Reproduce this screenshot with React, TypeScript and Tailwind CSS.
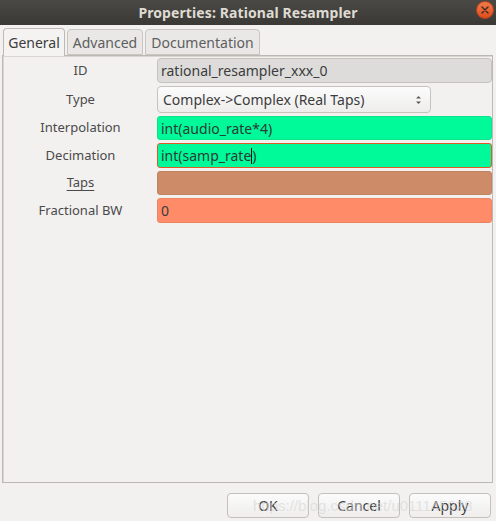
import React from "react";

const font = { fontFamily: '"Noto Sans", "DejaVu Sans", sans-serif' };

function Label({ children, underline }: { children: React.ReactNode; underline?: boolean }) {
  return (
    <div className="w-[153px] shrink-0 flex items-center justify-center text-[13px] text-[#4a4a4a]">
      <span className={underline ? "underline underline-offset-[3px]" : ""}>{children}</span>
    </div>
  );
}

export default function App() {
  return (
    <div
      className="w-[496px] h-[521px] bg-[#f2f1f0] flex flex-col overflow-hidden relative"
      style={font}
    >
      {/* Title bar */}
      <div className="h-[25px] shrink-0 bg-gradient-to-b from-[#4a4945] to-[#3a3935] flex items-center justify-center relative">
        <span className="text-[14px] font-bold text-[#dfdbd2] tracking-[0.1px]">Properties: Rational Resampler</span>
        <div className="absolute right-[2px] top-[1px] w-[18px] h-[18px] rounded-full bg-gradient-to-b from-[#f27a4a] to-[#df4c1a] border border-[#b9441a] flex items-center justify-center">
          <svg width="8" height="8" viewBox="0 0 8 8">
            <path d="M1 1 L7 7 M7 1 L1 7" stroke="#3a2a22" strokeWidth="1.4" strokeLinecap="round" />
          </svg>
        </div>
      </div>

      {/* Tabs */}
      <div className="h-[30px] shrink-0 flex items-end pl-[3px] gap-[2px] relative z-10">
        <div className="h-[28px] px-[5px] flex items-center bg-[#f4f3f2] border border-b-0 border-[#bdb9b4] rounded-t-[4px] text-[14px] text-[#3c3c3c] w-[62px] justify-center -mb-[1px]">
          General
        </div>
        <div className="h-[26px] w-[76px] flex items-center justify-center bg-[#e9e8e6] border border-[#c9c5c0] rounded-t-[4px] text-[14px] text-[#5e5e5e]">
          Advanced
        </div>
        <div className="h-[26px] w-[115px] flex items-center justify-center bg-[#e9e8e6] border border-[#c9c5c0] rounded-t-[4px] text-[14px] text-[#5e5e5e]">
          Documentation
        </div>
      </div>

      {/* Frame */}
      <div className="h-[428px] shrink-0 ml-[2px] mr-[3px] border border-[#bcb8b3] shadow-[inset_1px_1px_0_#d9d6d2] bg-[#f2f1f0] flex flex-col gap-[3px] pt-[2px] pl-[1px]">
        {/* ID */}
        <div className="flex h-[25px]">
          <Label>ID</Label>
          <div className="flex-1 rounded-[4px] border border-[#c6c3bf] bg-[#dddcdb] flex items-center pl-[3px] text-[14px] text-[#3c3c3c]">
            rational_resampler_xxx_0
          </div>
        </div>
        {/* Type */}
        <div className="flex h-[27px]">
          <Label>Type</Label>
          <div className="w-[274px] rounded-[4px] border border-[#c6c3bf] bg-gradient-to-b from-[#fcfcfc] to-[#eeedec] flex items-center pl-[5px] pr-[8px] text-[14px] text-[#3c3c3c] justify-between">
            <span>Complex-&gt;Complex (Real Taps)</span>
            <svg width="7" height="12" viewBox="0 0 7 12">
              <path d="M1 4.5 L3.5 2 L6 4.5 Z" fill="#5a5a5a" />
              <path d="M1 7.5 L3.5 10 L6 7.5 Z" fill="#5a5a5a" />
            </svg>
          </div>
        </div>
        {/* Interpolation */}
        <div className="flex h-[24px]">
          <Label>Interpolation</Label>
          <div className="flex-1 rounded-[3px] border border-[#0ee38a] bg-[#00fa9a] flex items-center pl-[3px] text-[14px] text-[#2b3a33]">
            int(audio_rate*4)
          </div>
        </div>
        {/* Decimation */}
        <div className="flex h-[25px]">
          <Label>Decimation</Label>
          <div className="flex-1 rounded-[3px] border border-[#de5a26] bg-[#00fa9a] flex items-center pl-[3px] text-[14px] text-[#2b3a33]">
            <span>int(samp_rate</span>
            <span className="inline-block w-[1px] h-[16px] bg-[#111]" />
            <span>)</span>
          </div>
        </div>
        {/* Taps */}
        <div className="flex h-[24px]">
          <Label underline>Taps</Label>
          <div className="flex-1 rounded-[3px] border border-[#bf8462] bg-[#cd8b68]" />
        </div>
        {/* Fractional BW */}
        <div className="flex h-[25px]">
          <Label>Fractional BW</Label>
          <div className="flex-1 rounded-[3px] border border-[#ee8562] bg-[#ff8b69] flex items-center pl-[3px] text-[14px] text-[#3c3c3c]">
            0
          </div>
        </div>
      </div>

      {/* Buttons */}
      <div className="flex justify-end gap-[9px] pr-[5px] mt-[10px] relative">
        {["OK", "Cancel", "Apply"].map((t) => (
          <div
            key={t}
            className="w-[82px] h-[25px] rounded-[4px] border border-[#c4c0bb] bg-gradient-to-b from-[#fbfbfb] to-[#efeeed] flex items-center justify-center text-[14px] text-[#3c3c3c]"
          >
            {t}
          </div>
        ))}
        <div
          className="absolute left-[253px] top-[2px] text-[15px] text-[#d4d4d4]/60 pointer-events-none whitespace-nowrap"
          style={{ fontFamily: '"Liberation Sans", sans-serif' }}
        >
          https://blog.csdn.net/u011145928
        </div>
      </div>
    </div>
  );
}
